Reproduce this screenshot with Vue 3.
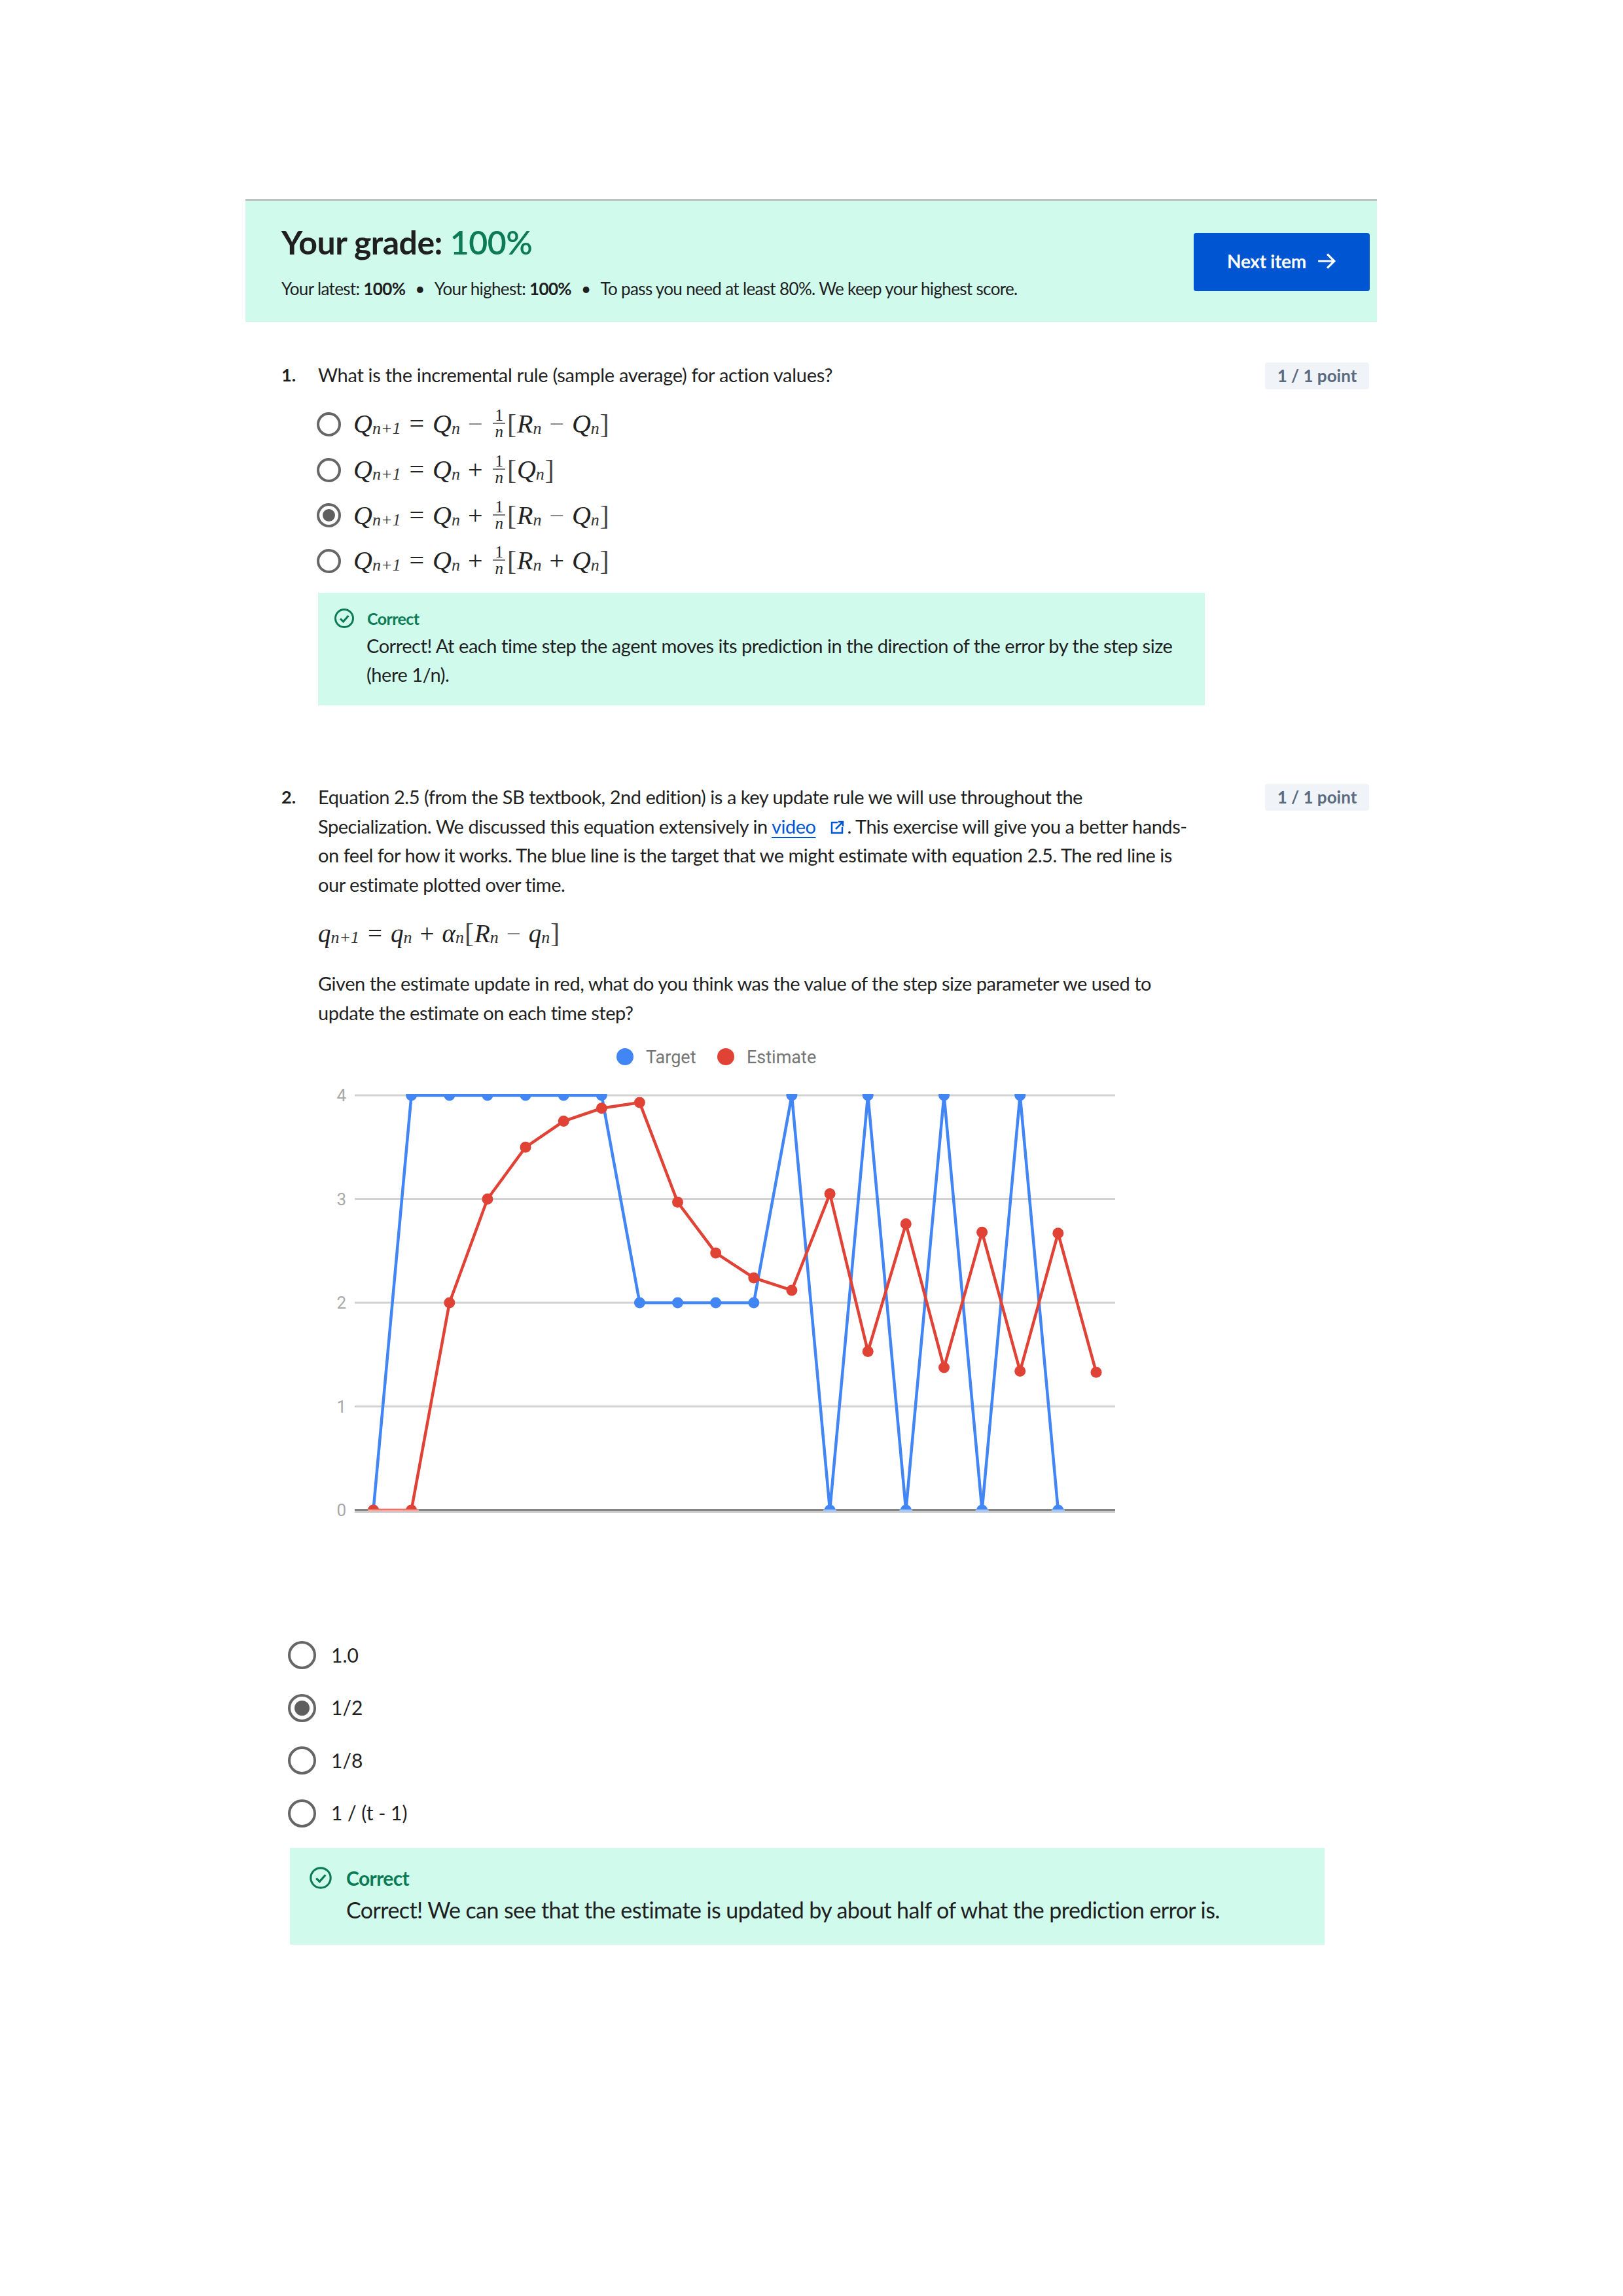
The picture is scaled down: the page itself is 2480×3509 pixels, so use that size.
<script setup>
const options1 = [
  { op: '−', inner: [['R', 'n'], '−', ['Q', 'n']], selected: false },
  { op: '+', inner: [['Q', 'n']], selected: false },
  { op: '+', inner: [['R', 'n'], '−', ['Q', 'n']], selected: true },
  { op: '+', inner: [['R', 'n'], '+', ['Q', 'n']], selected: false }
]
const options2 = [
  { label: '1.0', selected: false },
  { label: '1/2', selected: true },
  { label: '1/8', selected: false },
  { label: '1 / (t - 1)', selected: false }
]
const x = (i) => 570.5 + 58.13 * i
const y = (v) => 2307 - v * 158.5
const blueVals = [0, 4, 4, 4, 4, 4, 4, 2, 2, 2, 2, 4, 0, 4, 0, 4, 0, 4, 0]
const redVals = [0, 0, 2, 3, 3.5, 3.75, 3.875, 3.93, 2.97, 2.48, 2.24, 2.12, 3.05, 1.53, 2.76, 1.375, 2.68, 1.34, 2.67, 1.33]
const toPts = (vals) => vals.map((v, i) => ({ x: +x(i).toFixed(1), y: +y(v).toFixed(1) }))
const blue = toPts(blueVals)
const red = toPts(redVals)
const line = (pts) => pts.map((p) => `${p.x},${p.y}`).join(' ')
const grid = [4, 3, 2, 1]
const zeros = blue.filter((p) => p.y === 2307 && p.x > 600)
</script>

<template>
  <div class="page">
    <section class="banner">
      <div class="banner-text">
        <h1 class="grade">Your grade: <span class="green">100%</span></h1>
        <p class="summary">
          Your latest: <b>100%</b><span class="dot">•</span>Your highest: <b>100%</b><span class="dot">•</span>To pass you need at least 80%. We keep your highest score.
        </p>
      </div>
      <button class="next">
        Next item
        <svg class="arrow" viewBox="0 0 28 28" width="30" height="30"><path d="M2 14h23M15 4l10 10-10 10" fill="none" stroke="#fff" stroke-width="3"/></svg>
      </button>
    </section>

    <section class="q q1">
      <div class="num">1.</div>
      <div class="body">
        <p class="line">What is the incremental rule (sample average) for action values?</p>
        <div class="opts1">
          <div v-for="(o, k) in options1" :key="k" class="opt1">
            <span class="radio" :class="{ on: o.selected }"></span>
            <span class="math">
              <i>Q</i><sub>n+1</sub><span class="rel">=</span><i>Q</i><sub>n</sub><span class="bin" :class="{ thin: o.op === '−' }">{{ o.op }}</span>
              <span class="frac"><span>1</span><span class="under"><i>n</i></span></span>
              <span class="br">[</span>
              <template v-for="(t, j) in o.inner" :key="j">
                <span v-if="typeof t === 'string'" class="bin" :class="{ thin: t === '−' }">{{ t }}</span>
                <template v-else><i>{{ t[0] }}</i><sub>{{ t[1] }}</sub></template>
              </template>
              <span class="br">]</span>
            </span>
          </div>
        </div>
        <div class="feedback fb1">
          <div class="fb-head">
            <svg viewBox="0 0 32 32" width="32" height="32"><circle cx="16" cy="16" r="13.5" fill="none" stroke="#0b7a55" stroke-width="3"/><path d="M10 16.5l4.500 4.500 8-9" fill="none" stroke="#0b7a55" stroke-width="3"/></svg>
            <span class="fb-title">Correct</span>
          </div>
          <p class="fb-text">Correct! At each time step the agent moves its prediction in the direction of the error by the step size<br>(here 1/n).</p>
        </div>
      </div>
      <span class="badge">1 / 1 point</span>
    </section>

    <section class="q q2">
      <div class="num">2.</div>
      <div class="body">
        <p class="line">Equation 2.5 (from the SB textbook, 2nd edition) is a key update rule we will use throughout the<br>Specialization. We discussed this equation extensively in <a class="link">video</a><svg class="ext" viewBox="0 0 24 24" width="24" height="24"><path d="M13 4H4v16h16v-9" fill="none" stroke="#0056d2" stroke-width="2.500"/><path d="M10 14L20 4M14 3h7v7" fill="none" stroke="#0056d2" stroke-width="2.500"/></svg>. This exercise will give you a better hands-<br>on feel for how it works. The blue line is the target that we might estimate with equation 2.5. The red line is<br>our estimate plotted over time.</p>
        <div class="equation">
          <span class="math"><i>q</i><sub>n+1</sub><span class="rel">=</span><i>q</i><sub>n</sub><span class="bin">+</span><i>α</i><sub>n</sub><span class="br">[</span><i>R</i><sub>n</sub><span class="bin thin">−</span><i>q</i><sub>n</sub><span class="br">]</span></span>
        </div>
        <p class="line given">Given the estimate update in red, what do you think was the value of the step size parameter we used to<br>update the estimate on each time step?</p>
        <svg class="chart" viewBox="500 1571 1240 790" width="1240" height="790">
          <defs>
            <clipPath id="plot"><rect x="500" y="1671" width="1240" height="636"/></clipPath>
          </defs>
          <circle cx="955" cy="1614" r="13" fill="#4285f4"/>
          <text x="987" y="1624" class="legend">Target</text>
          <circle cx="1109" cy="1614" r="13" fill="#e04335"/>
          <text x="1141" y="1624" class="legend">Estimate</text>
          <template v-for="g in grid" :key="g">
            <rect x="542" :y="y(g) - 1.5" width="1162" height="3" fill="#d2d2d2"/>
            <text x="529" :y="y(g) + 9" class="tick">{{ g }}</text>
          </template>
          <text x="529" y="2316" class="tick">0</text>
          <rect x="542" y="2305" width="1162" height="3" fill="#848484"/>
          <rect x="542" y="2308" width="1162" height="3" fill="#cccccc"/>
          <g clip-path="url(#plot)">
            <polyline :points="line(blue)" fill="none" stroke="#4285f4" stroke-width="4.500"/>
            <circle v-for="(p, i) in blue" :key="'b' + i" :cx="p.x" :cy="p.y" r="8.500" fill="#4285f4"/>
            <polyline :points="line(red)" fill="none" stroke="#e04335" stroke-width="4.500"/>
            <circle v-for="(p, i) in red" :key="'r' + i" :cx="p.x" :cy="p.y" r="8.500" fill="#e04335"/>
          </g>
          <rect x="562" y="2306" width="78" height="3" fill="#f4a9a2"/>
          <rect v-for="(p, i) in zeros" :key="'z' + i" :x="p.x - 10" y="2306" width="20" height="4" fill="#a9c9fb"/>
        </svg>
      </div>
      <span class="badge">1 / 1 point</span>
    </section>

    <section class="opts2">
      <div v-for="o in options2" :key="o.label" class="opt2">
        <span class="radio big" :class="{ on: o.selected }"></span>
        <span class="opt2-label">{{ o.label }}</span>
      </div>
    </section>

    <section class="feedback fb2">
      <div class="fb-head">
        <svg viewBox="0 0 32 32" width="36" height="36"><circle cx="16" cy="16" r="13.500" fill="none" stroke="#0b7a55" stroke-width="2.800"/><path d="M10 16.500l4.500 4.500 8-9" fill="none" stroke="#0b7a55" stroke-width="2.800"/></svg>
        <span class="fb-title">Correct</span>
      </div>
      <p class="fb-text">Correct! We can see that the estimate is updated by about half of what the prediction error is.</p>
    </section>
  </div>
</template>

<style>
html, body { background: #fff; }
</style>

<style scoped>
.page {
  width: 2480px;
  height: 3509px;
  box-sizing: border-box;
  padding: 304px 0 0 375px;
  font-family: Lato, "Liberation Sans", sans-serif;
  color: #1f1f1f;
  overflow: hidden;
}
p, h1 { margin: 0; font-weight: 400; }
.banner {
  width: 1729px;
  height: 188px;
  box-sizing: border-box;
  border-top: 3px solid #bcc2c0;
  background: #cffaec;
  display: flex;
  align-items: flex-start;
  justify-content: space-between;
  padding: 45px 11px 0 55px;
}
.grade {
  font-size: 50px;
  line-height: 36px;
  font-weight: 700;
  letter-spacing: -0.5px;
  color: #1f1f1f;
}
.green { color: #0b7a55; font-weight: 600; }
.summary {
  margin-top: 36px;
  font-size: 26px;
  line-height: 34px;
  letter-spacing: -0.65px;
}
.summary b { font-weight: 700; }
.dot { margin: 0 15px; }
.next {
  width: 269px;
  height: 89px;
  border: 0;
  border-radius: 4px;
  background: #0056d2;
  color: #fff;
  font-family: inherit;
  font-size: 28px;
  font-weight: 700;
  display: flex;
  align-items: center;
  justify-content: center;
  gap: 16px;
  margin-top: 4px;
  padding: 0 0 3px;
  letter-spacing: -0.3px;
}
.q {
  width: 1717px;
  display: flex;
  align-items: flex-start;
  padding-left: 55px;
  box-sizing: border-box;
}
.q1 { margin-top: 59px; }
.q2 { margin-top: 118px; }
.num {
  width: 56px;
  flex: none;
  font-size: 27px;
  line-height: 44px;
  font-weight: 700;
}
.body { width: 1355px; flex: none; }
.line {
  font-size: 29px;
  line-height: 44.500px;
  letter-spacing: -0.3px;
}
.q2 .line { letter-spacing: -0.47px; }
.badge {
  margin-left: auto;
  margin-top: 2px;
  width: 159px;
  height: 41px;
  box-sizing: border-box;
  background: #f0f4f8;
  border-radius: 4px;
  color: #5a6b80;
  font-size: 26px;
  font-weight: 700;
  line-height: 41px;
  text-align: center;
  white-space: pre;
}
.q1 .badge { margin-top: 3px; }
.opts1 { margin-top: 18px; }
.opt1 {
  height: 69.700px;
  display: flex;
  align-items: center;
  gap: 19px;
  margin-left: -2px;
}
.radio {
  flex: none;
  width: 37px;
  height: 37px;
  box-sizing: border-box;
  border: 4px solid #666;
  border-radius: 50%;
  display: grid;
  place-items: center;
  background: #fff;
}
.radio.on::after {
  content: "";
  width: 19px;
  height: 19px;
  border-radius: 50%;
  background: #5f5f5f;
}
.radio.big { width: 43px; height: 43px; }
.radio.big.on::after { width: 23px; height: 23px; }
.math {
  display: inline-flex;
  align-items: center;
  font-family: "Liberation Serif", serif;
  font-size: 40px;
  color: #222;
  line-height: 1;
}
.math i { font-style: italic; }
.math sub {
  font-size: 26px;
  line-height: 1;
  position: relative;
  top: 7px;
  vertical-align: baseline;
  font-style: italic;
  color: #333;
}
.rel { margin: 0 13px; }
.bin { margin: 0 12px; }
.bin.thin { color: #888; }
.frac {
  display: inline-flex;
  flex-direction: column;
  align-items: center;
  font-size: 25px;
  margin: 0 2px 0 4px;
  line-height: 23px;
  position: relative;
  top: -1px;
}
.under { border-top: 2px solid #777; padding: 0 3px; }
.br { font-size: 42px; font-weight: 400; color: #444; margin: 0 1px; }
.feedback { background: #cffaec; box-sizing: border-box; }
.fb1 {
  margin-top: 14px;
  width: 1355px;
  height: 172px;
  padding: 17px 22px 0 24px;
}
.fb-head { display: flex; align-items: center; gap: 19px; height: 44px; }
.fb1 .fb-head { height: 44px; margin-bottom: -2px; }
.fb-title { color: #0b7a55; font-weight: 700; font-size: 25px; letter-spacing: -0.6px; }
.fb-text {
  padding-left: 50px;
  font-size: 29px;
  line-height: 44px;
  letter-spacing: -0.45px;
}
.link { color: #0056d2; text-decoration: underline; text-underline-offset: 5px; }
.ext { margin: 0 4px -3px 20px; }
.equation {
  margin-top: 22px;
  height: 60px;
  display: flex;
  align-items: center;
}
.equation .math { font-size: 39px; }
.given { margin-top: 25px; }
.chart { display: block; margin-left: 14px; margin-top: 2px; }
.legend { font-family: Roboto, "Liberation Sans", sans-serif; font-size: 27px; fill: #757575; }
.tick { font-family: Roboto, "Liberation Sans", sans-serif; font-size: 26px; fill: #a8a8a8; text-anchor: end; }
.opts2 { margin-top: 127px; padding-left: 65px; }
.opt2 {
  height: 80.500px;
  display: flex;
  align-items: center;
  gap: 23px;
  font-size: 30px;
}
.opt2-label { position: relative; top: -1px; }
.fb2 {
  margin: 13px 0 0 68px;
  width: 1581px;
  height: 148px;
  padding: 24px 0 0 29px;
}
.fb2 .fb-head { gap: 21px; }
.fb2 .fb-title { font-size: 30px; }
.fb2 .fb-text {
  padding-left: 57px;
  font-size: 34px;
  line-height: 54px;
  letter-spacing: -0.58px;
}
</style>
